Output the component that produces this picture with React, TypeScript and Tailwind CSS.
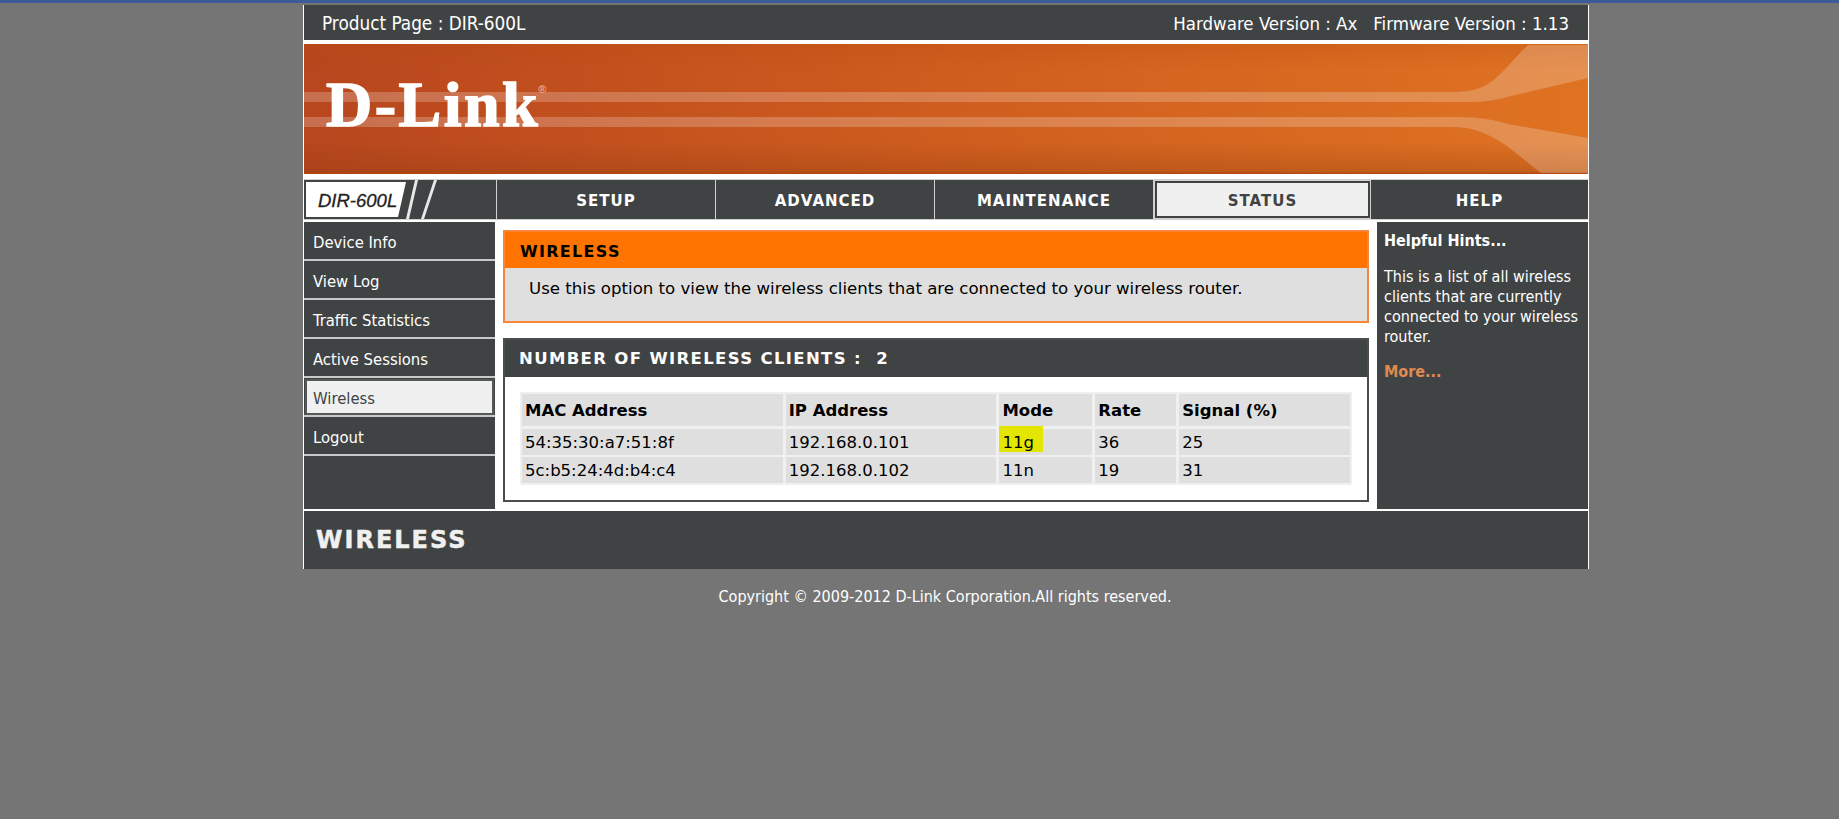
import React from 'react';

const DARK = 'bg-[#404344]';
const tabs = [
  { label: 'SETUP', w: 'w-[219px]' },
  { label: 'ADVANCED', w: 'w-[219px]' },
  { label: 'MAINTENANCE', w: 'w-[219px]' },
  { label: 'STATUS', w: 'w-[217px]', active: true },
  { label: 'HELP', w: 'flex-1' },
];
const sideItems = ['Device Info', 'View Log', 'Traffic Statistics', 'Active Sessions', 'Wireless', 'Logout'];
const colW = ['w-[261px]', 'w-[211px]', 'w-[93px]', 'w-[81px]', 'w-[171px]'];
const head = ['MAC Address', 'IP Address', 'Mode', 'Rate', 'Signal (%)'];
const rows = [
  ['54:35:30:a7:51:8f', '192.168.0.101', '11g', '36', '25'],
  ['5c:b5:24:4d:b4:c4', '192.168.0.102', '11n', '19', '31'],
];

const verdana = "font-['DejaVu_Sans',sans-serif]";
const tahoma = "font-['DejaVu_Sans_Condensed','DejaVu_Sans',sans-serif]";

const Banner = () => (
  <div className="relative h-[130px] bg-gradient-to-r from-[#b8461e] via-[#cf5d1e] to-[#df7322] overflow-hidden">
    <svg className="absolute inset-0 w-full h-full" viewBox="0 0 1285 130" preserveAspectRatio="none">
      <defs>
        <linearGradient id="shade" x1="0" y1="0" x2="0" y2="1">
          <stop offset="0" stopColor="#b8480c" stopOpacity="0.25" />
          <stop offset="0.2" stopColor="#b8480c" stopOpacity="0" />
          <stop offset="0.75" stopColor="#8a3a10" stopOpacity="0" />
          <stop offset="0.98" stopColor="#8a3a10" stopOpacity="0.3" />
          <stop offset="1" stopColor="#c04808" stopOpacity="1" />
        </linearGradient>
      </defs>
      <rect width="1285" height="130" fill="url(#shade)" />
      <path d="M0 48 H1150 C1190 48 1195 30 1225 1 H1285 V34 L1200 54 C1185 58 1175 58 1150 58 H0 Z" fill="#fff" fillOpacity="0.22" />
      <path d="M0 73 H1150 C1180 73 1190 76 1205 80 L1285 94 V129 H1238 C1215 112 1190 83 1150 83 H0 Z" fill="#fff" fillOpacity="0.22" />
    </svg>
    <div className="absolute left-[22px] top-[25px] flex items-start text-white font-['Liberation_Serif',serif] font-bold text-[64px] leading-[72px] tracking-[2.5px] [-webkit-text-stroke:1.5px_white]">
      D-Link
      <span className="text-[11px] leading-[12px] mt-[14px] -ml-[2px] tracking-normal [-webkit-text-stroke:0] font-['Liberation_Sans',sans-serif] text-[#e8b090]">®</span>
    </div>
  </div>
);

const NavBar = () => (
  <div className={`flex h-[41px] mt-[5px] ${DARK} border-y border-[#d0d0d0]`}>
    <div className="relative w-[193px] shrink-0 overflow-hidden border-r border-[#d0d0d0]">
      <svg className="absolute inset-0 w-full h-full" viewBox="0 0 192 39">
        <path d="M2 2 H102 L94 37 H2 Z" fill="#fff" />
        <path d="M111 0 H114 L105 39 H102 Z" fill="#e8e8e8" />
        <path d="M130 0 H133 L120 39 H117 Z" fill="#e8e8e8" />
      </svg>
      <span className="absolute left-[14px] top-[10px] italic text-[18.5px] leading-[22px] text-[#222] [-webkit-text-stroke:0.3px_#222] font-['Liberation_Sans',sans-serif]">DIR-600L</span>
    </div>
    {tabs.map(t => (
      <div
        key={t.label}
        className={`${t.w} flex items-center justify-center pt-[3px] font-bold text-[15px] tracking-[1px] ${verdana} ${
          t.active
            ? 'bg-[#f0f0f0] text-[#404344] border-[3px] border-[#404344] outline outline-1 -outline-offset-1 outline-[#d0d0d0]'
            : 'text-white border-r border-[#d0d0d0] last:border-r-0'
        }`}
      >
        {t.label}
      </div>
    ))}
  </div>
);

const Sidebar = () => (
  <div className={`w-[191px] shrink-0 flex flex-col ${DARK}`}>
    {sideItems.map(item =>
      item === 'Wireless' ? (
        <div key={item} className="h-[39px] border-b-2 border-[#c8c8c8] p-[1px] pb-0">
          <div className={`h-full bg-[#f0f0f0] border-2 border-[#55585a] flex items-center pt-[4px] pl-[6px] text-[16.5px] text-[#404344] ${tahoma}`}>
            {item}
          </div>
        </div>
      ) : (
        <div key={item} className={`h-[39px] border-b-2 border-[#c8c8c8] flex items-center pt-[6px] pl-[9px] text-[16.5px] text-white ${tahoma}`}>
          {item}
        </div>
      )
    )}
  </div>
);

const ClientsTable = () => (
  <div className={`w-[832px] p-[2px] bg-[#f0f0f0] text-[16.5px] text-black ${verdana}`}>
    <div className="flex gap-[3px] h-[32px] mb-[3px] font-bold">
      {head.map((h, i) => (
        <div key={h} className={`${colW[i]} bg-[#dfdfdf] flex items-center pt-[2px] pl-[3px]`}>{h}</div>
      ))}
    </div>
    {rows.map((r, ri) => (
      <div key={r[0]} className={`flex gap-[3px] h-[26px] ${ri === 0 ? 'mb-[2px]' : ''}`}>
        {r.map((c, i) => (
          <div key={i} className={`${colW[i]} relative bg-[#dfdfdf] flex items-center pt-[2px] pl-[3px]`}>
            {c === '11g' && <div className="absolute left-0 -top-[3px] w-[44px] h-[26px] bg-[#e3e600]" />}
            <span className="relative">{c}</span>
          </div>
        ))}
      </div>
    ))}
  </div>
);

export default function App() {
  return (
    <div className="min-h-[819px] bg-[#757575]">
      <div className="h-[3px] bg-[#3b5c96]" />
      <div className="w-[1286px] ml-[303px] mt-[2px] bg-white px-[1px]">
        <div className={`h-[35px] ${DARK} flex items-center justify-between pt-[3px] pl-[18px] pr-[19px] text-white text-[18.5px] ${tahoma}`}>
          <span className="text-[18.8px]">Product Page : DIR-600L</span>
          <div className="flex gap-[16px]">
            <span>Hardware Version : Ax</span>
            <span>Firmware Version : 1.13</span>
          </div>
        </div>
        <div className="pt-[4px]">
          <Banner />
        </div>
        <NavBar />
        <div className="flex mt-[2px] h-[287px]">
          <Sidebar />
          <div className="w-[882px] shrink-0 pt-[8px] pl-[8px]">
            <div className="w-[866px] h-[93px] border-2 border-[#f8853a] bg-[#dfdfdf]">
              <div className={`h-[36px] bg-[#ff7300] flex items-center pt-[3px] pl-[15px] font-bold text-[16px] tracking-[1.3px] text-black ${verdana}`}>WIRELESS</div>
              <p className={`pl-[24px] pt-[9px] text-[16.6px] text-black ${verdana}`}>
                Use this option to view the wireless clients that are connected to your wireless router.
              </p>
            </div>
            <div className="w-[866px] h-[164px] mt-[15px] border-2 border-[#4a4d4e] bg-white">
              <div className={`h-[37px] ${DARK} flex items-center pt-[2px] pl-[14px] font-bold text-[16.5px] tracking-[1.35px] text-white whitespace-pre ${verdana}`}>
                NUMBER OF WIRELESS CLIENTS :  2
              </div>
              <div className="pt-[15px] pl-[15px]">
                <ClientsTable />
              </div>
            </div>
          </div>
          <div className={`flex-1 ${DARK} pl-[7px] pt-[9px] text-white text-[16px] leading-[20px] ${tahoma}`}>
            <div className="font-bold">Helpful Hints...</div>
            <p className="mt-[16px]">
              This is a list of all wireless clients that are currently connected to your wireless router.
            </p>
            <div className="mt-[15px] font-bold text-[#e08a50]">More...</div>
          </div>
        </div>
        <div className={`mt-[2px] h-[58px] ${DARK} flex items-center pl-[12px]`}>
          <span className="font-['DejaVu_Sans',sans-serif] font-bold text-[24px] tracking-[2px] text-[#f0f0f0] [-webkit-text-stroke:0.5px_#f0f0f0]">WIRELESS</span>
        </div>
      </div>
      <div className={`w-[1286px] ml-[302px] mt-[17px] text-center text-white text-[16px] leading-[22px] ${tahoma}`}>
        Copyright © 2009-2012 D-Link Corporation.All rights reserved.
      </div>
    </div>
  );
}
